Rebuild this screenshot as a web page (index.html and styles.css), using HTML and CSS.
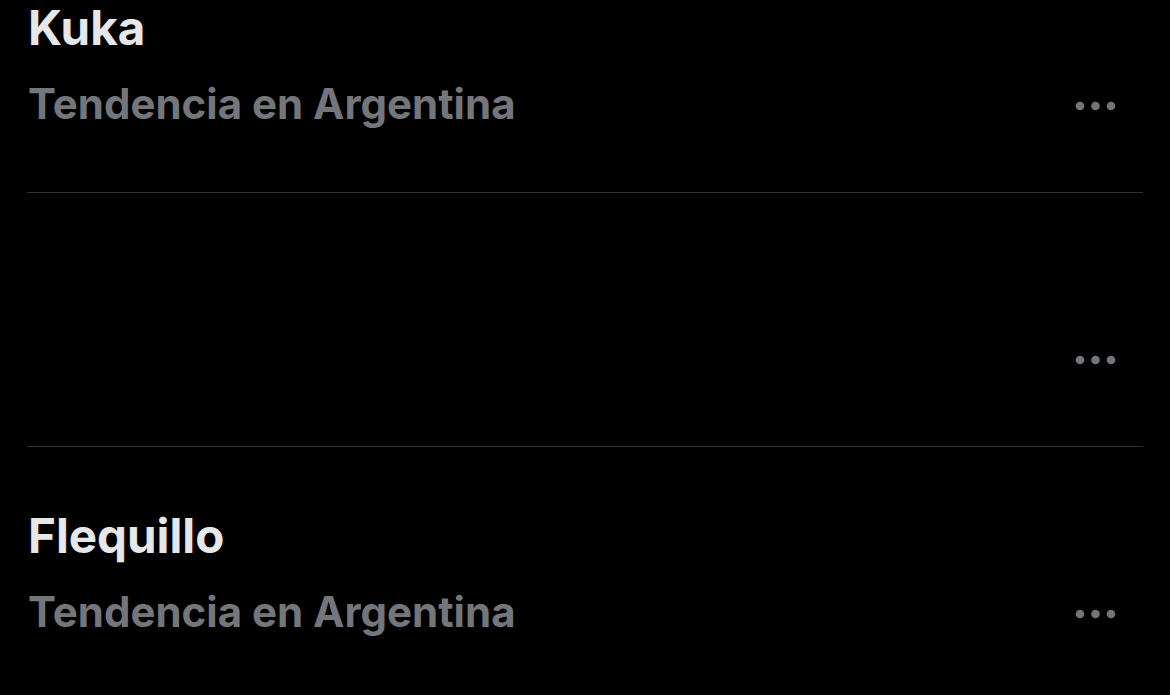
FILE: index.html
```html
<!DOCTYPE html>
<html lang="es">
<head>
    <meta charset="UTF-8">
    <meta name="viewport" content="width=device-width, initial-scale=1.0">
    <title>Tendencias</title>
    <link rel="stylesheet" href="styles.css">
</head>
<body>
    <div class="trends">
        <div class="trend">
            <div class="trend-name">Kuka</div>
            <div class="trend-meta">
                <span class="trend-context">Tendencia en Argentina</span>
                <button class="more" aria-label="Más opciones">
                    <svg width="41" height="10" viewBox="0 0 41 10"><circle cx="5" cy="5" r="4.3"/><circle cx="20.5" cy="5" r="4.3"/><circle cx="36" cy="5" r="4.3"/></svg>
                </button>
            </div>
        </div>
        <div class="trend">
            <div class="trend-name"></div>
            <div class="trend-meta">
                <span class="trend-context"></span>
                <button class="more" aria-label="Más opciones">
                    <svg width="41" height="10" viewBox="0 0 41 10"><circle cx="5" cy="5" r="4.3"/><circle cx="20.5" cy="5" r="4.3"/><circle cx="36" cy="5" r="4.3"/></svg>
                </button>
            </div>
        </div>
        <div class="trend">
            <div class="trend-name">Flequillo</div>
            <div class="trend-meta">
                <span class="trend-context">Tendencia en Argentina</span>
                <button class="more" aria-label="Más opciones">
                    <svg width="41" height="10" viewBox="0 0 41 10"><circle cx="5" cy="5" r="4.3"/><circle cx="20.5" cy="5" r="4.3"/><circle cx="36" cy="5" r="4.3"/></svg>
                </button>
            </div>
        </div>
    </div>
</body>
</html>
```

FILE: styles.css
```css
body {
    margin: 0;
    background-color: #000000;
    font-family: Inter, "Noto Sans", sans-serif;
    overflow: hidden;
}
.trends {
    margin-top: -61px;
}
.trend {
    margin: 0 27px;
    padding: 61px 27px 62px 1px;
    height: 130px;
    border-bottom: 1px solid #2f3336;
}
.trend-name {
    height: 56px;
    font-size: 47.5px;
    line-height: 56px;
    font-weight: 700;
    color: #e6e7e8;
}
.trend-meta {
    display: flex;
    justify-content: space-between;
    align-items: center;
    margin-top: 22px;
    height: 52px;
}
.trend-context {
    font-size: 42px;
    line-height: 52px;
    font-weight: 700;
    color: #73777b;
}
.more {
    padding: 0;
    border: none;
    background: none;
    display: flex;
    margin-top: 4px;
}
.more svg {
    fill: #71767b;
}
```
